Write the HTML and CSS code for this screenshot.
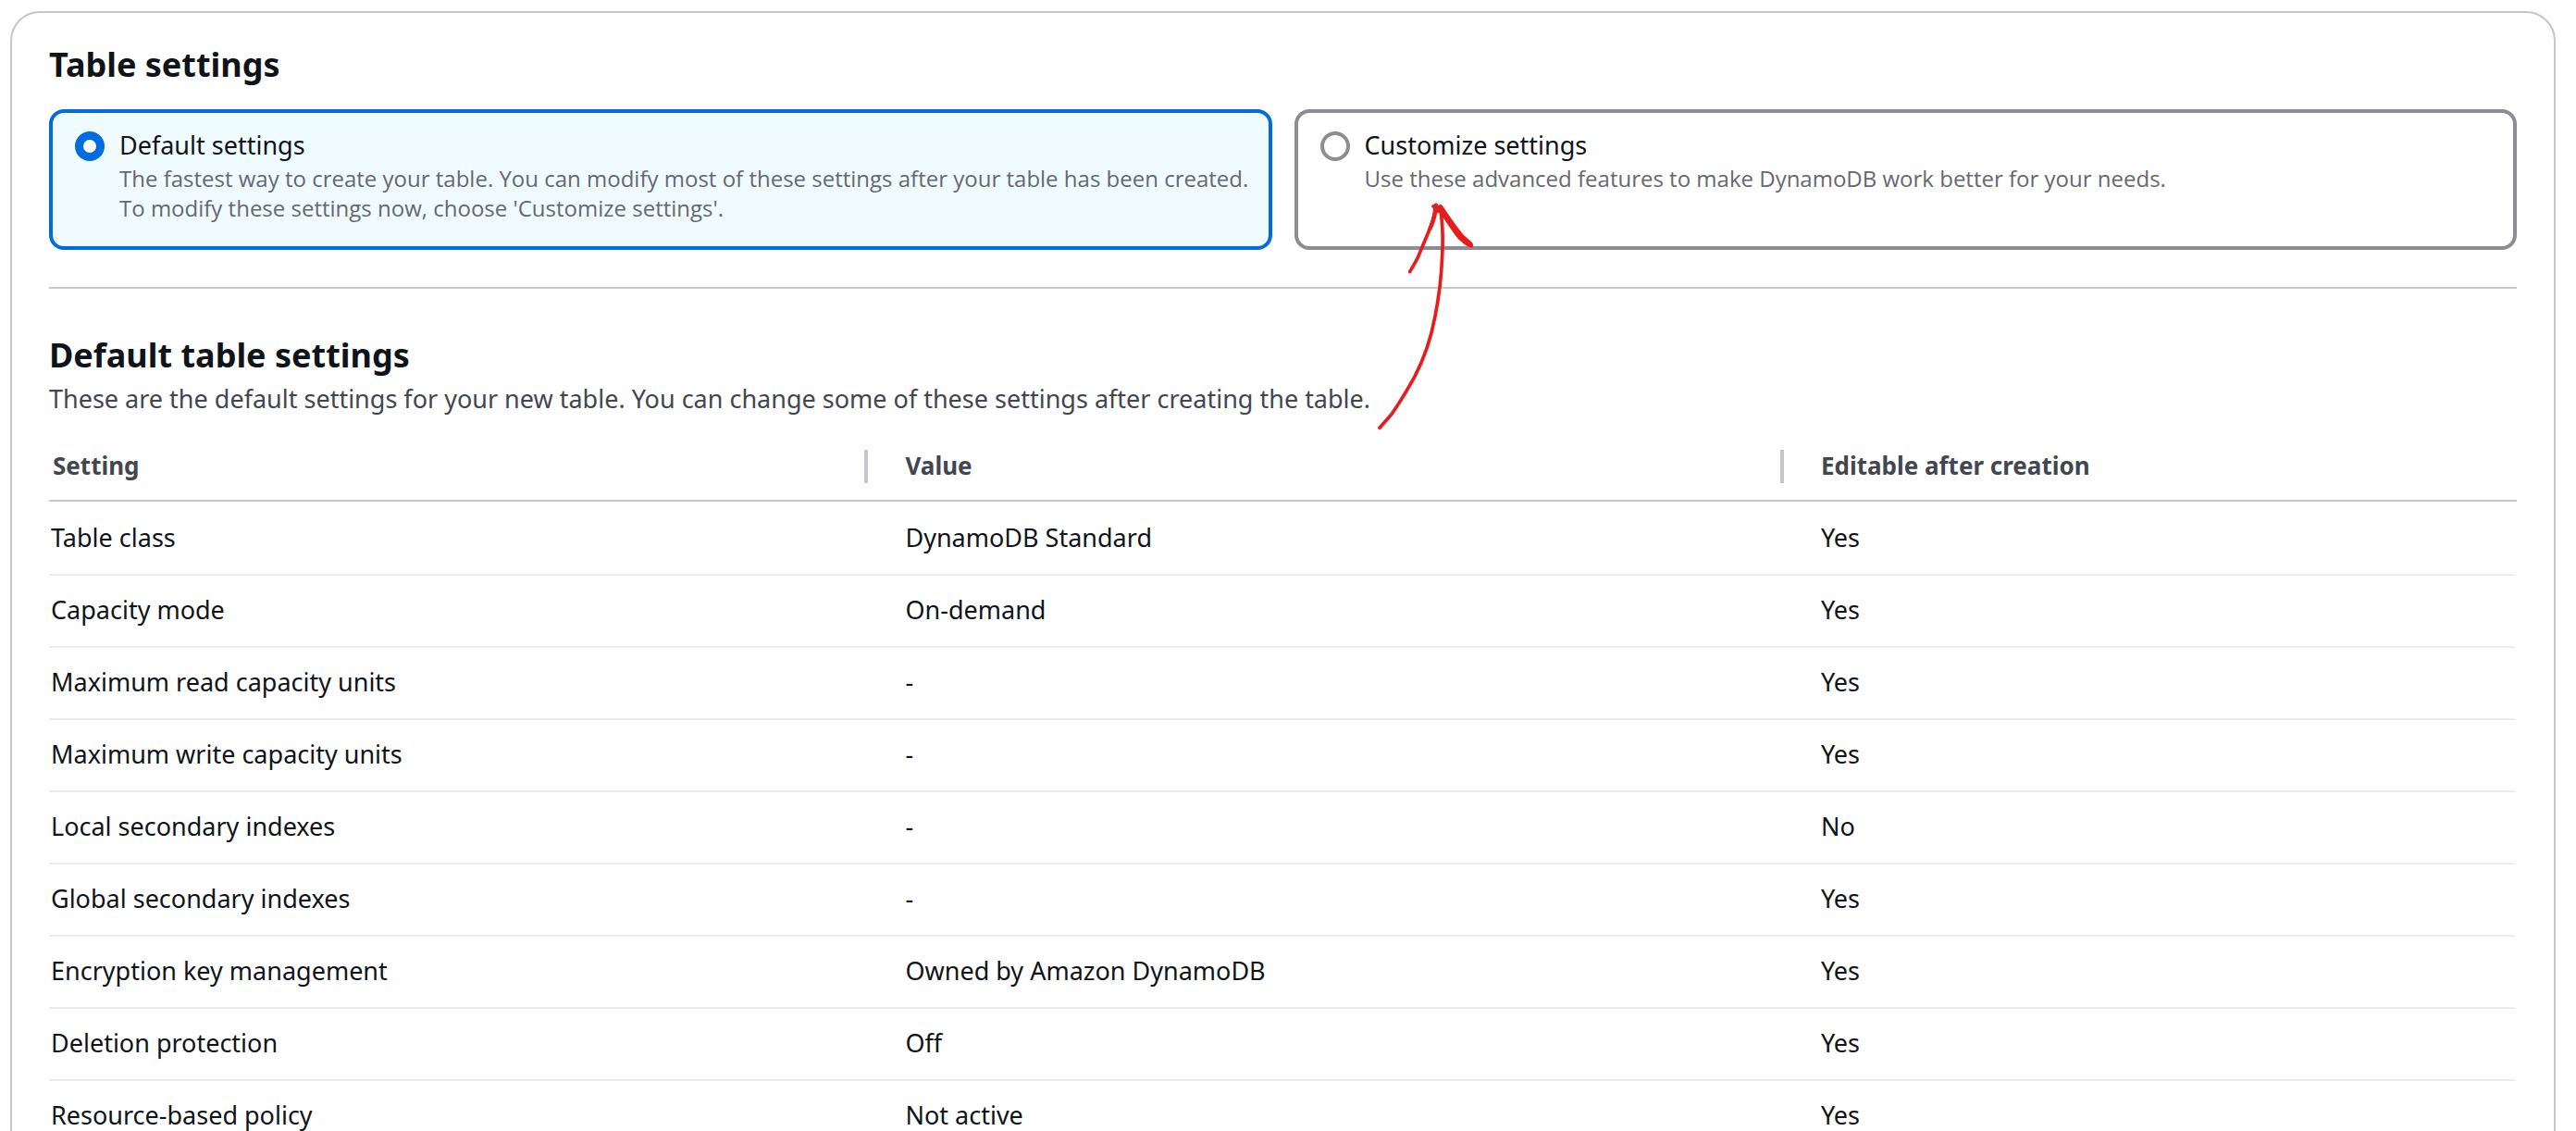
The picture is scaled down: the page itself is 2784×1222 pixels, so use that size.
FILE: index.html
```html
<!DOCTYPE html>
<html lang="en">
<head>
<meta charset="utf-8">
<meta name="viewport" content="width=device-width, initial-scale=1">
<title>Table settings</title>
<link rel="stylesheet" href="styles.css">
</head>
<body>
<main class="panel">
  <section>
    <h2 class="title" id="table-settings">Table settings</h2>
    <div class="tiles" role="radiogroup" aria-labelledby="table-settings">
      <label class="tile">
        <input class="radio" type="radio" name="mode" checked>
        <span class="tile-text">
          <span class="tile-label">Default settings</span>
          <span class="tile-desc">The fastest way to create your table. You can modify most of these settings after your table has been created. To modify these settings now, choose 'Customize settings'.</span>
        </span>
      </label>
      <label class="tile">
        <input class="radio" type="radio" name="mode">
        <span class="tile-text">
          <span class="tile-label">Customize settings</span>
          <span class="tile-desc">Use these advanced features to make DynamoDB work better for your needs.</span>
        </span>
        <svg class="arrow" viewBox="321 348 330 750" aria-hidden="true">
          <g fill="none" stroke="#e81c1c" stroke-linecap="round" stroke-linejoin="round">
            <path stroke-width="11" d="M333 1087 L370 1045 C400 1004 424 962 446 922 C480 858 500 795 513 725 C528 650 534 580 536 530 C539 470 539 420 528 370"/>
            <path stroke-width="11" d="M431 581 L455 539 L489 458 Q512 405 514 366"/>
            <path stroke-width="13" d="M497 440 Q515 400 515 368"/>
          </g>
          <path fill="#e81c1c" d="M501 369 Q502 362 510 362 Q516 353 522 362 L523 367 Q532 359 538 368 L552 389 Q585 437 605 461 L632 485 Q640 493 633 503 Q627 505 608 492 Q585 475 574 457 L542 410 L527 389 L520 390 L507 377 Z"/>
        </svg>
      </label>
    </div>
  </section>
  <section class="defaults">
    <h2 class="title">Default table settings</h2>
    <p class="subtitle">These are the default settings for your new table. You can change some of these settings after creating the table.</p>
    <table class="grid">
      <thead>
        <tr>
          <th class="col-setting" scope="col"><div class="head">Setting</div></th>
          <th class="col-value" scope="col"><div class="head">Value</div></th>
          <th scope="col"><div class="head">Editable after creation</div></th>
        </tr>
      </thead>
      <tbody>
        <tr><td>Table class</td><td>DynamoDB Standard</td><td>Yes</td></tr>
        <tr><td>Capacity mode</td><td>On-demand</td><td>Yes</td></tr>
        <tr><td>Maximum read capacity units</td><td>-</td><td>Yes</td></tr>
        <tr><td>Maximum write capacity units</td><td>-</td><td>Yes</td></tr>
        <tr><td>Local secondary indexes</td><td>-</td><td>No</td></tr>
        <tr><td>Global secondary indexes</td><td>-</td><td>Yes</td></tr>
        <tr><td>Encryption key management</td><td>Owned by Amazon DynamoDB</td><td>Yes</td></tr>
        <tr><td>Deletion protection</td><td>Off</td><td>Yes</td></tr>
        <tr><td>Resource-based policy</td><td>Not active</td><td>Yes</td></tr>
      </tbody>
    </table>
  </section>
</main>
</body>
</html>
```
FILE: styles.css
```css
*,
*::before,
*::after {
  box-sizing: border-box;
}

body {
  margin: 0;
  padding: 12px 22px 0 11px;
  background: #fff;
  color: #0f141a;
  font-family: "Noto Sans", "Open Sans", sans-serif;
  font-size: 27px;
  line-height: 40px;
}

.panel {
  padding: 32px 40px 40px;
  border: 2px solid #c6c6cd;
  border-radius: 32px;
}

.title {
  margin: 0;
  font-size: 36px;
  font-weight: 700;
  line-height: 48px;
}

.tiles {
  display: grid;
  grid-template-columns: 1fr 1fr;
  gap: 24px;
  margin-top: 24px;
}

.tile {
  position: relative;
  display: flex;
  align-items: flex-start;
  gap: 16px;
  padding: 15px 0 25px 24px;
  border: 4px solid #8c8c94;
  border-radius: 16px;
}

.tile:has(.radio:checked) {
  border-color: #006ce0;
  background: #f0fbff;
}

.radio {
  flex: none;
  appearance: none;
  width: 32px;
  height: 32px;
  margin: 5px 0 0;
  border: 4px solid #8c8c94;
  border-radius: 50%;
  background: #fff;
}

.radio:checked {
  border: 9px solid #006ce0;
}

.tile-label,
.tile-desc {
  display: block;
}

.tile-desc {
  color: #656871;
  font-family: "Open Sans", "Noto Sans", sans-serif;
  font-size: 24px;
  line-height: 32px;
}

.arrow {
  position: absolute;
  top: 94px;
  left: 84px;
  z-index: 1;
  width: 110px;
  height: 250px;
  pointer-events: none;
}

.defaults {
  margin-top: 40px;
  padding-top: 48px;
  border-top: 2px solid #c6c6cd;
}

.subtitle {
  margin: 5px 0 37px;
  color: #424650;
  line-height: 36px;
}

.grid {
  width: 100%;
  table-layout: fixed;
  border-collapse: separate;
  border-spacing: 0;
}

.col-setting {
  width: 33.2%;
}

.col-value {
  width: 37.1%;
}

th {
  padding: 0 0 18px;
  border-bottom: 2px solid #c6c6cd;
  color: #424650;
  font-size: 26px;
  font-weight: 700;
  text-align: left;
}

.head {
  height: 36px;
  padding-left: 40px;
  border-right: 4px solid #c6c6cd;
  line-height: 34px;
}

th:first-child .head {
  padding-left: 4px;
}

th:last-child .head {
  border-right: 0;
}

td {
  padding: 17px 0 19px 40px;
  border-bottom: 2px solid #ebebf0;
}

td:first-child {
  padding-left: 2px;
}

td:last-child {
  border-right: 4px solid transparent;
}

tbody tr:first-child td {
  padding-top: 19px;
}
```
